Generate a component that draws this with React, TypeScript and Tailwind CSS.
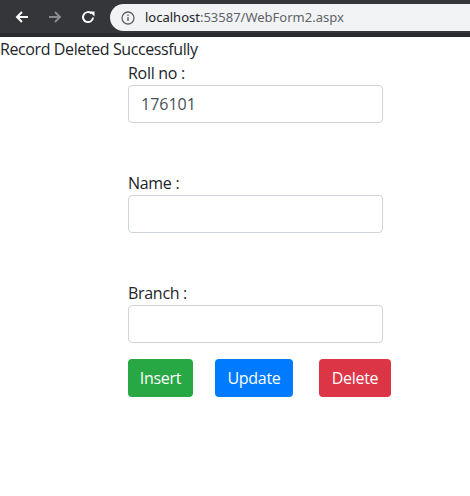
import React from "react";

function Back() {
  return (
    <svg width="16" height="16" viewBox="0 0 16 16" fill="none" stroke="currentColor" strokeWidth="2">
      <path d="M14 8H3M8 3L3 8l5 5" />
    </svg>
  );
}
function Fwd() {
  return (
    <svg width="16" height="16" viewBox="0 0 16 16" fill="none" stroke="currentColor" strokeWidth="2">
      <path d="M2 8h11M8 3l5 5-5 5" />
    </svg>
  );
}
function Reload() {
  return (
    <svg width="16" height="16" viewBox="0 0 16 16" fill="none">
      <path d="M13 8.5A5 5 0 1 1 11.5 4.5" stroke="currentColor" strokeWidth="2" />
      <path d="M9.5 2.5h5v5z" fill="currentColor" />
    </svg>
  );
}
function Info() {
  return (
    <svg width="14" height="14" viewBox="0 0 14 14" fill="none">
      <circle cx="7" cy="7" r="6" stroke="#5f6368" strokeWidth="1.3" />
      <rect x="6.3" y="6" width="1.4" height="4" fill="#5f6368" />
      <rect x="6.3" y="3.6" width="1.4" height="1.4" fill="#5f6368" />
    </svg>
  );
}

export default function App() {
  const font = { fontFamily: '"Open Sans", "Noto Sans", sans-serif' };
  return (
    <div className="w-[470px] h-[496px] bg-white" style={font}>
      <div className="h-[37px] bg-[#35363a] flex flex-col">
        <div className="h-[33px] flex items-start">
          <div className="flex items-center h-[36px] -mt-[1px] pl-[14px] gap-[17px]">
            <span className="text-white flex"><Back /></span>
            <span className="text-[#8a8b8d] flex"><Fwd /></span>
            <span className="text-white flex"><Reload /></span>
          </div>
          <div className="mt-[4px] ml-[14px] h-[27px] flex-1 bg-[#f1f3f4] rounded-l-full flex items-center pl-[11px]">
            <Info />
            <span className="ml-[10px] text-[13px] text-[#202124]" style={{ fontFamily: '"Noto Sans", sans-serif' }}>
              localhost<span className="text-[#5f6368]">:53587/WebForm2.aspx</span>
            </span>
          </div>
        </div>
        <div className="h-[4px] bg-[#2a2b2e]" />
      </div>
      <div className="text-[16px] leading-[24px] text-[#212529] tracking-[-0.4px]">Record Deleted Successfully</div>
      <div className="ml-[128px] w-[255px] text-[16px] leading-[24px] text-[#212529]">
        <div className="tracking-[-0.3px]">Roll no :</div>
        <div className="h-[38px] border border-[#ced4da] rounded-[4px] px-[12px] flex items-center text-[#495057]">176101</div>
        <div className="h-[48px]" />
        <div className="tracking-[-0.3px]">Name :</div>
        <div className="h-[38px] border border-[#ced4da] rounded-[4px]" />
        <div className="h-[48px]" />
        <div className="tracking-[-0.3px]">Branch :</div>
        <div className="h-[38px] border border-[#ced4da] rounded-[4px]" />
        <div className="flex mt-[16px] text-white tracking-[-0.3px] w-[300px]">
          <button className="shrink-0 h-[38px] w-[65px] rounded-[4px] bg-[#28a745]">Insert</button>
          <button className="shrink-0 h-[38px] w-[78px] ml-[22px] rounded-[4px] bg-[#007bff]">Update</button>
          <button className="shrink-0 h-[38px] w-[72px] ml-[26px] rounded-[4px] bg-[#dc3545]">Delete</button>
        </div>
      </div>
    </div>
  );
}
